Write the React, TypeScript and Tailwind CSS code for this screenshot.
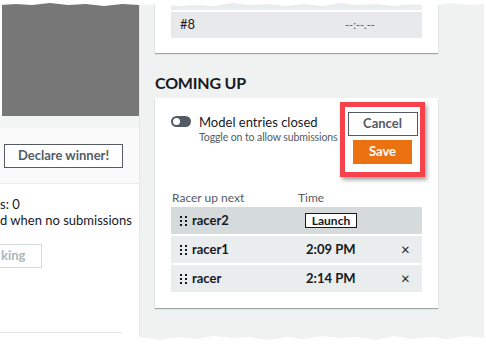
import React from 'react';

const FONT = { fontFamily: 'Lato, "Liberation Sans", sans-serif' };

const DragHandle = () => (
  <svg width="8" height="11" viewBox="0 0 8 11" className="shrink-0">
    {[0, 4, 8].map((y) =>
      [1, 6].map((x) => <rect key={`${x}-${y}`} x={x} y={y + 1} width="2" height="2" fill="#16191f" />)
    )}
  </svg>
);

const TornEdge = ({ bottom }: { bottom?: boolean }) => (
  <svg
    className={`absolute left-0 w-full ${bottom ? 'bottom-0' : 'top-0'}`}
    height="12"
    viewBox="0 0 486 12"
    preserveAspectRatio="none"
  >
    <path
      d={
        bottom
          ? 'M0 12 L0 4 L20 5 L34 3 L52 6 L70 4 L88 5 L104 2 L122 5 L140 3 L160 6 L178 3 L196 5 L214 2 L232 4 L250 3 L268 6 L286 3 L304 5 L322 2 L340 4 L358 3 L376 6 L394 2 L412 5 L430 3 L448 5 L466 2 L486 4 L486 12 Z'
          : 'M0 0 L486 0 L486 4 L470 5 L450 3 L430 6 L412 4 L394 6 L376 4 L358 5 L340 3 L322 6 L304 4 L286 6 L268 4 L250 5 L232 3 L214 6 L196 5 L178 6 L160 4 L140 5 L122 4 L104 6 L86 4 L68 5 L50 3 L32 5 L16 4 L0 5 Z'
      }
      fill="#ffffff"
    />
  </svg>
);

const rows = [
  { name: 'racer2', time: null },
  { name: 'racer1', time: '2:09 PM' },
  { name: 'racer', time: '2:14 PM' },
];

export default function App() {
  return (
    <div className="relative w-[486px] h-[346px] overflow-hidden bg-white text-[#16191f]" style={FONT}>
      <div className="flex h-full pr-[2px]">
        {/* left column, cropped */}
        <div className="w-[140px] shrink-0 flex flex-col border-r border-[#e5e7e7]">
          <div className="h-[116px] ml-[2px] bg-[#777777]" />
          <div className="h-[12px] bg-[#f2f3f3]" />
          <div className="h-[56px] bg-[#fafafa] border-b border-[#eaeded] flex items-center">
            <div className="ml-[4px] w-[119px] h-[24px] border border-[#545b64] bg-white flex items-center justify-center text-[13px] font-bold text-[#545b64]">
              Declare winner!
            </div>
          </div>
          <div className="flex-1 bg-white flex flex-col">
            <div className="mt-[12px] text-[13px] leading-[16px] whitespace-nowrap">s: 0</div>
            <div className="text-[13px] leading-[16px] whitespace-nowrap">d when no submissions</div>
            <div className="mt-[16px] w-[42px] h-[24px] border border-l-0 border-[#d5dbdb] flex items-center pl-[1px] text-[13px] font-bold text-[#aab7b8]">
              king
            </div>
            <div className="mt-auto mb-[13px] mr-[17px] border-b border-[#e5e7e7]" />
          </div>
        </div>

        {/* right column */}
        <div className="flex-1 min-w-0 bg-[#f0f1f1] pl-[15px] pr-[46px] flex flex-col">
          <div className="h-[53px] bg-white shadow-[0_1px_1px_0_rgba(0,28,36,0.35)] px-[16px] flex flex-col">
            <div className="h-[10px] bg-[#eaeded] mb-[2px]" />
            <div className="h-[26px] bg-[#e7e9ea] flex items-center text-[13px]">
              <span className="ml-[9px] w-[165px]">#8</span>
              <span className="text-[11px] text-[#545b64]">--:--.--</span>
            </div>
          </div>

          <h2 className="mt-[19px] text-[16px] leading-[22px] font-bold tracking-[-0.2px]">COMING UP</h2>

          <div className="mt-[4px] h-[210px] min-w-0 bg-white shadow-[0_1px_1px_0_rgba(0,28,36,0.35)] px-[16px] flex flex-col">
            <div className="flex min-w-0">
              <div className="flex-1 min-w-0 flex pt-[17px] gap-[8px]">
                <div className="w-[20px] h-[11px] rounded-full bg-[#545b64] relative shrink-0 mt-[1px]">
                  <div className="absolute left-[2px] top-[2px] w-[7px] h-[7px] rounded-full bg-white" />
                </div>
                <div className="flex flex-col whitespace-nowrap">
                  <span className="text-[13px] leading-[15px]">Model entries closed</span>
                  <span className="text-[10.5px] leading-[15px] tracking-[-0.1px] text-[#545b64]">Toggle on to allow submissions</span>
                </div>
              </div>
              <div className="shrink-0 -mr-[3px] mt-[4px] w-[85px] h-[75px] border-[5px] border-[#f6424a] bg-white shadow-[2px_3px_4px_rgba(0,0,0,0.35)] flex flex-col items-center pt-[5px]">
                <div className="w-[70px] h-[24px] border border-[#545b64] flex items-center justify-center text-[13px] font-bold text-[#545b64]">
                  Cancel
                </div>
                <div className="mt-[4px] w-[59px] h-[24px] bg-[#ec7211] flex items-center justify-center text-[13px] font-bold text-white">
                  Save
                </div>
              </div>
            </div>

            <div className="mt-[14px] flex text-[12px] text-[#545b64] leading-[14px]">
              <span className="ml-[1px] w-[126px]">Racer up next</span>
              <span>Time</span>
            </div>
            <div className="mt-[2px] flex flex-col gap-[2px]">
              {rows.map((r, i) => (
                <div
                  key={r.name}
                  className={`h-[27px] flex items-center text-[13px] font-bold ${i === 0 ? 'bg-[#d5dbdb]' : 'bg-[#eaeded]'}`}
                >
                  <div className="ml-[8px] w-[126px] flex items-center gap-[5px]">
                    <DragHandle />
                    <span>{r.name}</span>
                  </div>
                  {r.time ? (
                    <>
                      <span className="ml-[1px] w-[95px]">{r.time}</span>
                      <span className="text-[15px] font-normal">×</span>
                    </>
                  ) : (
                    <span className="h-[15px] w-[52px] border border-[#16191f] bg-white flex items-center justify-center text-[12px] leading-none">
                      Launch
                    </span>
                  )}
                </div>
              ))}
            </div>
          </div>
        </div>
      </div>
      <TornEdge />
      <TornEdge bottom />
    </div>
  );
}
